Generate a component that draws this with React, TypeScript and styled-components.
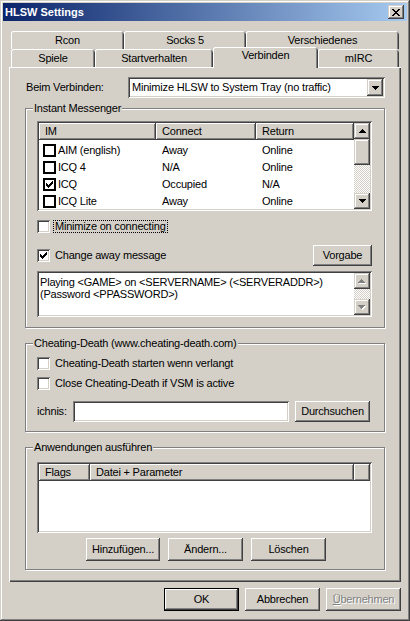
import React from 'react';
import styled, { createGlobalStyle, css } from 'styled-components';

const face = '#d4d0c8';

const GlobalStyle = createGlobalStyle`
  html, body { margin: 0; padding: 0; background: ${face}; }
  body {
    font-family: "Liberation Sans", Arial, sans-serif;
    font-size: 11px;
    line-height: 13px;
    letter-spacing: -0.2px;
    color: #000;
  }
  *, *::before, *::after { box-sizing: border-box; }
`;

// 3D edges as drawn by the classic Windows look
const edgeRaised = css`
  box-shadow: inset -1px -1px 0 #404040, inset 1px 1px 0 ${face}, inset -2px -2px 0 #808080, inset 2px 2px 0 #fff;
`;
const buttonRaised = css`
  box-shadow: inset -1px -1px 0 #404040, inset 1px 1px 0 #fff, inset -2px -2px 0 #808080, inset 2px 2px 0 ${face};
`;
const edgeSunken = css`
  box-shadow: inset 1px 1px 0 #808080, inset -1px -1px 0 #fff, inset 2px 2px 0 #404040, inset -2px -2px 0 ${face};
`;

const DOWN = ['XXXXXXX', '.XXXXX.', '..XXX..', '...X...'];
const UP = [...DOWN].reverse();
const CHECK = ['......X', '.....XX', 'X...XXX', 'XX.XXX.', 'XXXXX..', '.XXX...', '..X....'];
const CLOSE = ['XX....XX', '.XX..XX.', '..XXXX..', '...XX...', '..XXXX..', '.XX..XX.', 'XX....XX'];

const Pixels: React.FC<{ rows: string[]; color?: string; shadow?: string }> = ({ rows, color = '#000', shadow }) => {
  const w = rows[0].length + (shadow ? 1 : 0);
  const h = rows.length + (shadow ? 1 : 0);
  const draw = (fill: string, d: number) =>
    rows.flatMap((r, y) =>
      [...r].map((c, x) =>
        c === 'X' ? <rect key={`${fill}-${x}-${y}`} x={x + d} y={y + d} width={1} height={1} fill={fill} /> : null,
      ),
    );
  return (
    <svg width={w} height={h} viewBox={`0 0 ${w} ${h}`} shapeRendering="crispEdges">
      {shadow && draw(shadow, 1)}
      {draw(color, 0)}
    </svg>
  );
};

const Window = styled.div`
  width: 410px;
  height: 621px;
  padding: 3px;
  display: flex;
  flex-direction: column;
  background: ${face};
  box-shadow: inset -1px -1px 0 #404040, inset 1px 1px 0 ${face}, inset -2px -2px 0 #808080, inset 2px 2px 0 #fff;
`;

const TitleBar = styled.div`
  height: 18px;
  flex: none;
  display: flex;
  align-items: center;
  justify-content: space-between;
  padding: 0 3px 0 2px;
  background: linear-gradient(to right, #0a246a, #a6caf0);
`;

const TitleText = styled.span`
  color: #fff;
  font-weight: bold;
  font-size: 11px;
  letter-spacing: 0;
`;

const CloseButton = styled.div`
  width: 16px;
  height: 14px;
  background: ${face};
  ${edgeRaised};
  display: flex;
  align-items: center;
  justify-content: center;
  padding: 0 1px 0 0;
`;

const Body = styled.div`
  flex: 1;
  display: flex;
  flex-direction: column;
  padding: 10px 6px 7px;
`;

const TabStrip = styled.div`
  display: flex;
  flex-direction: column;
  padding-left: 2px;
`;

const TabRow = styled.div`
  display: flex;
  height: 18px;
`;

const Tab = styled.div<{ $w: number; $active?: boolean }>`
  width: ${({ $w }) => $w}px;
  height: 18px;
  flex: none;
  display: flex;
  justify-content: center;
  padding-top: 3px;
  border-radius: 3px 3px 0 0;
  box-shadow: inset 1px 0 0 #fff, inset 0 1px 0 #fff, inset -1px 0 0 #404040, inset -2px 0 0 #808080;
  ${({ $active }) =>
    $active &&
    css`
      height: 21px;
      margin-top: -2px;
      padding-top: 2px;
      position: relative;
      z-index: 1;
      background: ${face};
    `}
`;

const Panel = styled.div`
  height: 515px;
  flex: none;
  display: flex;
  flex-direction: column;
  padding: 10px 16px 0;
  box-shadow: inset 1px 1px 0 #fff, inset -1px -1px 0 #404040, inset -2px -2px 0 #808080;
`;

const FieldRow = styled.div<{ $mt?: number; $start?: boolean }>`
  display: flex;
  align-items: center;
  justify-content: ${({ $start }) => ($start ? 'flex-start' : 'space-between')};
  height: 21px;
  flex: none;
  margin-top: ${({ $mt }) => $mt ?? 0}px;
`;

const FieldLabel = styled.span<{ $w?: number }>`
  padding-left: 1px;
  ${({ $w }) => $w && `width: ${$w}px; flex: none; padding-left: 0;`}
`;

const Combo = styled.div`
  width: 257px;
  height: 21px;
  background: #fff;
  padding: 2px;
  display: flex;
  align-items: center;
  justify-content: space-between;
  ${edgeSunken};
`;

const ComboText = styled.span`
  padding-left: 2px;
  white-space: nowrap;
`;

const DropButton = styled.div`
  width: 16px;
  height: 17px;
  flex: none;
  background: ${face};
  display: flex;
  align-items: center;
  justify-content: center;
  ${edgeRaised};
`;

const Group = styled.div<{ $h: number; $mt: number; $pt: number }>`
  position: relative;
  flex: none;
  height: ${({ $h }) => $h}px;
  margin-top: ${({ $mt }) => $mt}px;
  padding: ${({ $pt }) => $pt}px 12px 0 11px;
  display: flex;
  flex-direction: column;
  border: 1px solid #808080;
  box-shadow: inset 1px 1px 0 #fff, 1px 1px 0 #fff;
`;

const GroupLabel = styled.span`
  position: absolute;
  top: -7px;
  left: 7px;
  padding: 0 1px;
  background: ${face};
  white-space: nowrap;
`;

const ListView = styled.div<{ $h: number }>`
  width: 335px;
  height: ${({ $h }) => $h}px;
  flex: none;
  background: #fff;
  padding: 2px;
  display: flex;
  ${edgeSunken};
`;

const ListMain = styled.div`
  flex: 1;
  min-width: 0;
  overflow: hidden;
  display: flex;
  flex-direction: column;
`;

const HeaderRow = styled.div`
  display: flex;
  height: 17px;
  flex: none;
`;

const HeaderCell = styled.div<{ $w: number }>`
  width: ${({ $w }) => $w}px;
  flex: none;
  background: ${face};
  padding: 2px 6px 0;
  white-space: nowrap;
  overflow: hidden;
  ${buttonRaised};
`;

const ListBody = styled.div`
  padding-top: 2px;
`;

const ListRow = styled.div`
  display: flex;
  align-items: center;
  height: 17px;
`;

const ListCell = styled.div<{ $w: number; $first?: boolean }>`
  width: ${({ $w }) => $w}px;
  flex: none;
  display: flex;
  align-items: center;
  gap: 2px;
  padding-left: ${({ $first }) => ($first ? 4 : 6)}px;
  white-space: nowrap;
`;

const ListCheck = styled.span`
  width: 13px;
  height: 13px;
  flex: none;
  background: #fff;
  border: 1px solid #000;
  box-shadow: inset 0 0 0 1px #000;
  display: flex;
  align-items: center;
  justify-content: center;
`;

const ScrollBar = styled.div`
  width: 16px;
  flex: none;
  display: flex;
  flex-direction: column;
`;

const ScrollButton = styled.div`
  height: 16px;
  flex: none;
  background: ${face};
  display: flex;
  align-items: center;
  justify-content: center;
  ${edgeRaised};
`;

const ScrollThumb = styled.div<{ $h: number }>`
  height: ${({ $h }) => $h}px;
  flex: none;
  background: ${face};
  ${edgeRaised};
`;

const ScrollTrack = styled.div`
  flex: 1;
  background-color: #fff;
  background-image: repeating-conic-gradient(${face} 0 25%, #fff 0 50%);
  background-size: 2px 2px;
`;

const CheckRow = styled.div<{ $mt?: number }>`
  display: flex;
  align-items: center;
  height: 13px;
  flex: none;
  margin-top: ${({ $mt }) => $mt ?? 0}px;
`;

const CheckBox = styled.span`
  width: 13px;
  height: 13px;
  flex: none;
  background: #fff;
  display: flex;
  align-items: center;
  justify-content: center;
  ${edgeSunken};
`;

const CheckLabel = styled.span<{ $focus?: boolean }>`
  margin-left: 3px;
  padding: 0 1px;
  line-height: 11px;
  border: 1px dotted ${({ $focus }) => ($focus ? '#000' : 'transparent')};
  white-space: nowrap;
`;

const AwayRow = styled.div`
  display: flex;
  align-items: center;
  justify-content: space-between;
  height: 21px;
  flex: none;
  margin-top: 12px;
`;

const Memo = styled.div`
  width: 335px;
  height: 46px;
  flex: none;
  margin-top: 5px;
  background: #fff;
  padding: 2px;
  display: flex;
  ${edgeSunken};
`;

const MemoText = styled.div`
  flex: 1;
  padding: 3px 0 0 1px;
  line-height: 12px;
  white-space: pre;
  overflow: hidden;
`;

const TextInput = styled.div`
  width: 216px;
  height: 21px;
  flex: none;
  margin-right: 6px;
  background: #fff;
  ${edgeSunken};
`;

const Button = styled.div<{ $w: number; $h?: number; $default?: boolean; $disabled?: boolean }>`
  width: ${({ $w }) => $w}px;
  height: ${({ $h }) => $h ?? 23}px;
  flex: none;
  background: ${face};
  display: flex;
  align-items: center;
  justify-content: center;
  white-space: nowrap;
  ${buttonRaised};
  ${({ $default }) =>
    $default &&
    css`
      box-shadow: inset 0 0 0 1px #000, inset -2px -2px 0 #404040, inset 2px 2px 0 #fff, inset -3px -3px 0 #808080;
    `}
  ${({ $disabled }) =>
    $disabled &&
    css`
      color: #808080;
      text-shadow: 1px 1px 0 #fff;
    `}
`;

const ButtonRow = styled.div<{ $mt: number; $gap: number; $pl?: number; $end?: boolean }>`
  display: flex;
  flex: none;
  gap: ${({ $gap }) => $gap}px;
  margin-top: ${({ $mt }) => $mt}px;
  padding-left: ${({ $pl }) => $pl ?? 0}px;
  justify-content: ${({ $end }) => ($end ? 'flex-end' : 'flex-start')};
`;

const Key = styled.span`
  text-decoration: underline;
`;

const messengers = [
  { im: 'AIM (english)', connect: 'Away', ret: 'Online', checked: false },
  { im: 'ICQ 4', connect: 'N/A', ret: 'Online', checked: false },
  { im: 'ICQ', connect: 'Occupied', ret: 'N/A', checked: true },
  { im: 'ICQ Lite', connect: 'Away', ret: 'Online', checked: false },
];

const Check: React.FC<{ checked?: boolean }> = ({ checked }) => (
  <CheckBox>{checked && <Pixels rows={CHECK} />}</CheckBox>
);

export default function App() {
  return (
    <>
      <GlobalStyle />
      <Window>
        <TitleBar>
          <TitleText>HLSW Settings</TitleText>
          <CloseButton>
            <Pixels rows={CLOSE} />
          </CloseButton>
        </TitleBar>

        <Body>
          <TabStrip>
            <TabRow>
              <Tab $w={113}>Rcon</Tab>
              <Tab $w={122}>Socks 5</Tab>
              <Tab $w={153}>Verschiedenes</Tab>
            </TabRow>
            <TabRow>
              <Tab $w={84}>Spiele</Tab>
              <Tab $w={118}>Startverhalten</Tab>
              <Tab $w={105} $active>
                Verbinden
              </Tab>
              <Tab $w={81}>mIRC</Tab>
            </TabRow>
          </TabStrip>

          <Panel>
            <FieldRow>
              <FieldLabel>Beim Verbinden:</FieldLabel>
              <Combo>
                <ComboText>Minimize HLSW to System Tray (no traffic)</ComboText>
                <DropButton>
                  <Pixels rows={DOWN} />
                </DropButton>
              </Combo>
            </FieldRow>

            <Group $h={220} $mt={10} $pt={12}>
              <GroupLabel>Instant Messenger</GroupLabel>
              <ListView $h={90}>
                <ListMain>
                  <HeaderRow>
                    <HeaderCell $w={117}>IM</HeaderCell>
                    <HeaderCell $w={100}>Connect</HeaderCell>
                    <HeaderCell $w={98}>Return</HeaderCell>
                  </HeaderRow>
                  <ListBody>
                    {messengers.map((m) => (
                      <ListRow key={m.im}>
                        <ListCell $w={117} $first>
                          <ListCheck>{m.checked && <Pixels rows={CHECK} />}</ListCheck>
                          {m.im}
                        </ListCell>
                        <ListCell $w={100}>{m.connect}</ListCell>
                        <ListCell $w={98}>{m.ret}</ListCell>
                      </ListRow>
                    ))}
                  </ListBody>
                </ListMain>
                <ScrollBar>
                  <ScrollButton>
                    <Pixels rows={UP} />
                  </ScrollButton>
                  <ScrollThumb $h={26} />
                  <ScrollTrack />
                  <ScrollButton>
                    <Pixels rows={DOWN} />
                  </ScrollButton>
                </ScrollBar>
              </ListView>

              <CheckRow $mt={9}>
                <Check />
                <CheckLabel $focus>Minimize on connecting</CheckLabel>
              </CheckRow>

              <AwayRow>
                <CheckRow>
                  <Check checked />
                  <CheckLabel>Change away message</CheckLabel>
                </CheckRow>
                <Button $w={59} $h={21}>
                  Vorgabe
                </Button>
              </AwayRow>

              <Memo>
                <MemoText>
                  {'Playing <GAME> on <SERVERNAME> (<SERVERADDR>)\n(Password <PPASSWORD>)'}
                </MemoText>
                <ScrollBar>
                  <ScrollButton>
                    <Pixels rows={UP} color="#808080" shadow="#fff" />
                  </ScrollButton>
                  <ScrollTrack />
                  <ScrollButton>
                    <Pixels rows={DOWN} color="#808080" shadow="#fff" />
                  </ScrollButton>
                </ScrollBar>
              </Memo>
            </Group>

            <Group $h={89} $mt={15} $pt={13}>
              <GroupLabel>Cheating-Death (www.cheating-death.com)</GroupLabel>
              <CheckRow>
                <Check />
                <CheckLabel>Cheating-Death starten wenn verlangt</CheckLabel>
              </CheckRow>
              <CheckRow $mt={7}>
                <Check />
                <CheckLabel>Close Cheating-Death if VSM is active</CheckLabel>
              </CheckRow>
              <FieldRow $mt={11} $start>
                <FieldLabel $w={36}>ichnis:</FieldLabel>
                <TextInput />
                <Button $w={75} $h={21}>
                  Durchsuchen
                </Button>
              </FieldRow>
            </Group>

            <Group $h={123} $mt={15} $pt={14}>
              <GroupLabel>Anwendungen ausführen</GroupLabel>
              <ListView $h={71}>
                <ListMain>
                  <HeaderRow>
                    <HeaderCell $w={51}>Flags</HeaderCell>
                    <HeaderCell $w={264}>Datei + Parameter</HeaderCell>
                    <HeaderCell $w={16} />
                  </HeaderRow>
                </ListMain>
              </ListView>
              <ButtonRow $mt={5} $gap={8} $pl={49}>
                <Button $w={74}>Hinzufügen...</Button>
                <Button $w={75}>Ändern...</Button>
                <Button $w={75}>Löschen</Button>
              </ButtonRow>
            </Group>
          </Panel>

          <ButtonRow $mt={6} $gap={6} $end>
            <Button $w={75} $default>
              OK
            </Button>
            <Button $w={75}>Abbrechen</Button>
            <Button $w={75} $disabled>
              <Key>Ü</Key>bernehmen
            </Button>
          </ButtonRow>
        </Body>
      </Window>
    </>
  );
}
